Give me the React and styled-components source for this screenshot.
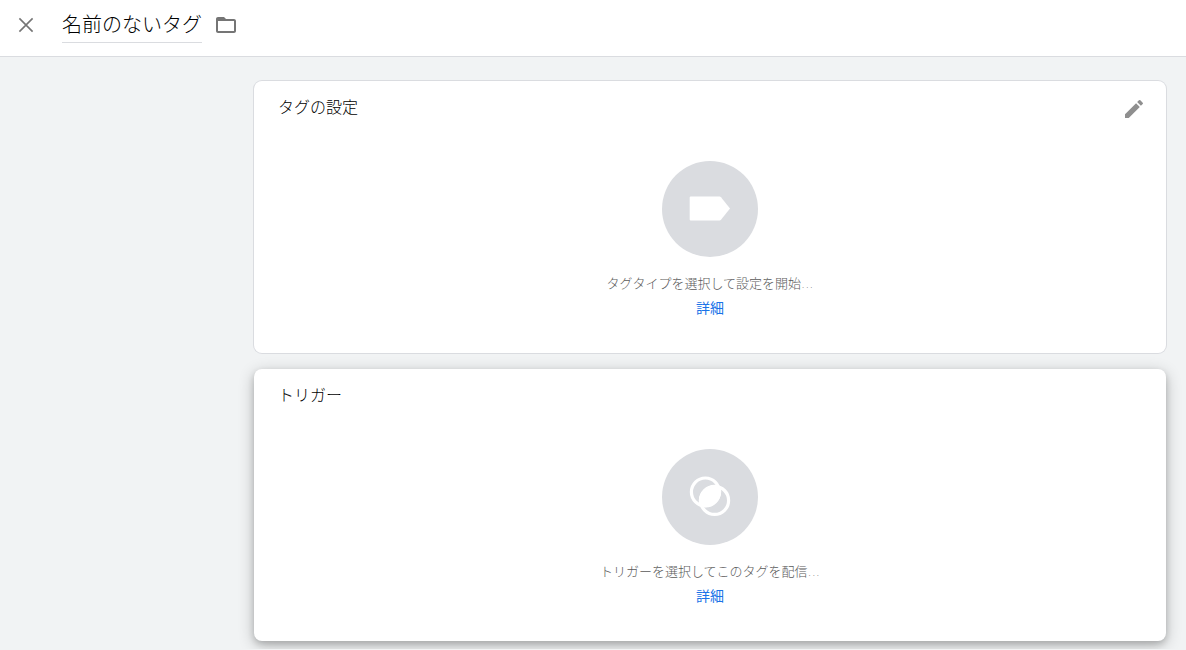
import React, { useState } from 'react';
import styled, { createGlobalStyle } from 'styled-components';
import { MdEdit, MdFolderOpen } from 'react-icons/md';

const GlobalStyle = createGlobalStyle`
	* {
		box-sizing: border-box;
	}

	body {
		margin: 0;
		background: #f1f3f4;
		color: #000;
		font-family: Roboto, "Noto Sans CJK JP", sans-serif;
		font-weight: 300;
	}
`;

const Header = styled.header`
	display: flex;
	align-items: center;
	height: 57px;
	padding: 0 14px 6px;
	background: white;
	border-bottom: 1px solid #dadce0;
`;

const IconButton = styled.button`
	display: flex;
	padding: 0;
	border: 0;
	background: none;
	color: ${({ $color }) => $color || '#757575'};
	font-size: 24px;
	cursor: pointer;
`;

const NameInput = styled.input`
	width: 140px;
	height: 36px;
	margin: 0 12px 0 24px;
	padding: 0 0 2px;
	border: 0;
	border-bottom: 1px solid #dadce0;
	outline: 0;
	background: none;
	color: inherit;
	font: inherit;
	font-size: 20px;
`;

const Main = styled.main`
	display: grid;
	gap: 16px;
	padding: 24px 20px 8px 254px;
`;

const Card = styled.section`
	padding: 16px 20px 32px 24px;
	border-radius: 8px;
	background: white;
	box-shadow: ${({ $raised }) => $raised
		? '0 3px 6px rgba(0, 0, 0, 0.16), 0 4px 16px rgba(0, 0, 0, 0.24)'
		: '0 0 0 1px #dadce0'};
`;

const CardHeader = styled.div`
	display: flex;
	justify-content: space-between;
	height: 24px;
`;

const CardTitle = styled.h2`
	margin: 0;
	font-size: 16px;
	font-weight: 300;
	line-height: 22px;
`;

const Placeholder = styled.div`
	display: flex;
	flex-direction: column;
	align-items: center;
	padding: 40px 4px 0 0;
`;

const Circle = styled.div`
	display: flex;
	align-items: center;
	justify-content: center;
	width: 96px;
	height: 96px;
	margin-bottom: 16px;
	border-radius: 50%;
	background: #dadce0;
	color: white;
`;

const Hint = styled.p`
	margin: 0 0 2px;
	color: #5a5a5a;
	font-family: "DejaVu Sans", "Noto Sans CJK JP", sans-serif;
	font-size: 13px;
	line-height: 22px;
`;

const MoreLink = styled.a`
	margin-bottom: 2px;
	color: #1a73e8;
	font-size: 14px;
	font-weight: 400;
	line-height: 22px;
	text-decoration: none;
`;

const CloseIcon = () => (
	<svg width="24" height="24" viewBox="0 0 24 24" fill="none" stroke="currentColor" strokeWidth="1.6">
		<path d="M5.4 5.4 18.6 18.6M18.6 5.4 5.4 18.6" />
	</svg>
)

const TagIcon = () => (
	<svg width="48" height="48" viewBox="0 0 48 48" fill="currentColor">
		<path d="M4.6 11.5h29q.8 0 1.4.7L44 23.5 35 34.8q-.6.7-1.4.7h-29q-.9 0-.9-.9V12.4q0-.9.9-.9z" />
	</svg>
)

const TriggerIcon = () => (
	<svg width="48" height="48" viewBox="0 0 48 48" fill="none" stroke="currentColor" strokeWidth="3.2">
		<circle cx="19.4" cy="19" r="14" />
		<circle cx="28.6" cy="27.4" r="14" />
		<path d="M34.4 13.6A15.6 15.6 0 0 1 13.6 32.8 15.6 15.6 0 0 1 34.4 13.6z" fill="currentColor" stroke="none" />
	</svg>
)

const SetupCard = ({ title, hint, icon, raised, editable }) => {
	return (
		<Card $raised={raised}>
			<CardHeader>
				<CardTitle>{title}</CardTitle>
				{ editable &&
					<IconButton type="button" $color="#8f8f8f" aria-label={`${title}を編集`}>
						<MdEdit />
					</IconButton>
				}
			</CardHeader>
			<Placeholder>
				<Circle>{icon}</Circle>
				<Hint>{hint}</Hint>
				<MoreLink href="#">詳細</MoreLink>
			</Placeholder>
		</Card>
	)
}

const App = () => {
	const [name, setName] = useState('名前のないタグ');

	return (
		<>
			<GlobalStyle />
			<Header>
				<IconButton type="button" aria-label="閉じる">
					<CloseIcon />
				</IconButton>
				<NameInput
					aria-label="タグ名"
					value={name}
					onChange={(e) => setName(e.target.value)}
				/>
				<IconButton type="button" aria-label="フォルダ">
					<MdFolderOpen />
				</IconButton>
			</Header>
			<Main>
				<SetupCard
					title="タグの設定"
					hint="タグタイプを選択して設定を開始..."
					icon={<TagIcon />}
					editable
				/>
				<SetupCard
					title="トリガー"
					hint="トリガーを選択してこのタグを配信..."
					icon={<TriggerIcon />}
					raised
				/>
			</Main>
		</>
	)
}

export default App;
